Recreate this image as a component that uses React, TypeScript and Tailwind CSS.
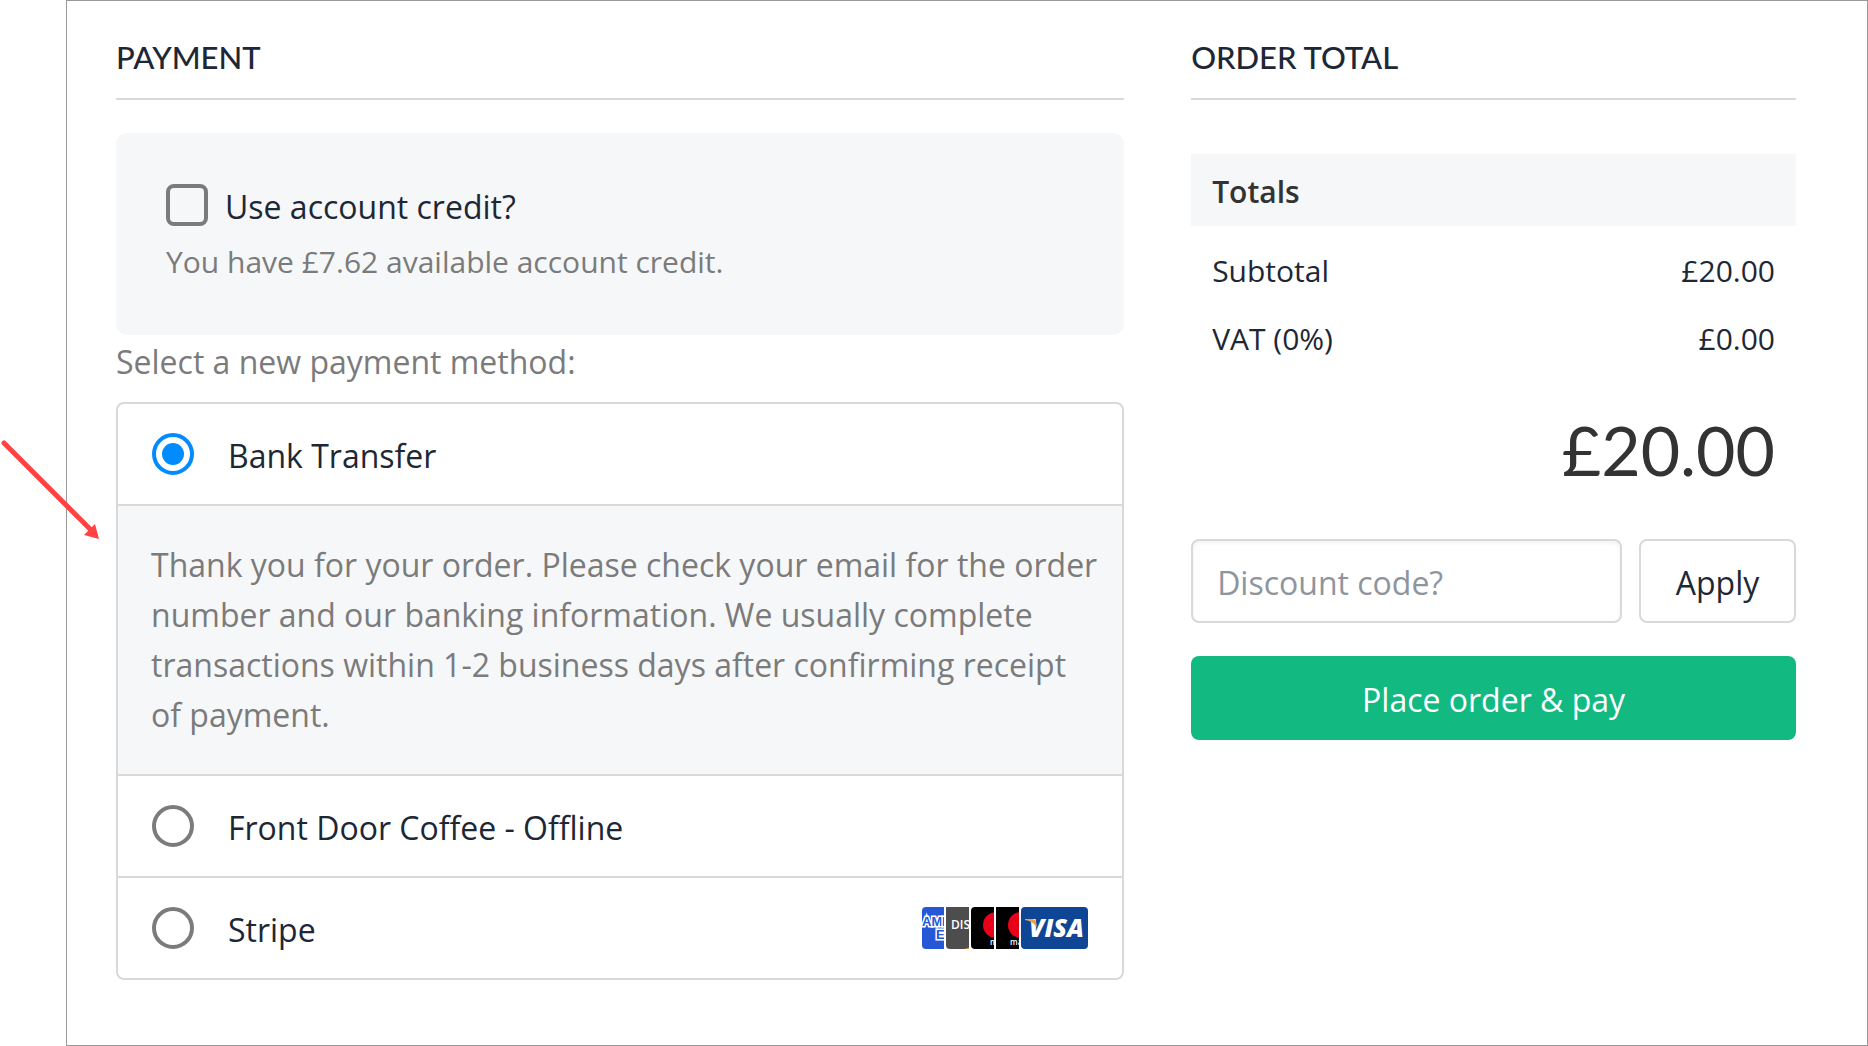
import { useState, type ReactNode } from "react"

const methods = [
  {
    id: "bank",
    label: "Bank Transfer",
    details:
      "Thank you for your order. Please check your email for the order number and our banking information. We usually complete transactions within 1-2 business days after confirming receipt of payment.",
  },
  { id: "offline", label: "Front Door Coffee - Offline" },
  { id: "stripe", label: "Stripe", cards: true },
]

const totals = [
  { label: "Subtotal", value: "£20.00" },
  { label: "VAT (0%)", value: "£0.00" },
]

function SectionHeading({ children }: { children: ReactNode }) {
  return (
    <h2 className="border-b-2 border-[#d9d9d9] pt-[35px] pb-5 font-['Lato',sans-serif] text-[31px] leading-[42px] font-medium uppercase">
      {children}
    </h2>
  )
}

function CardLogos() {
  return (
    <svg width="166" height="42" viewBox="0 0 166 42" role="img" aria-label="Accepted cards" className="shrink-0">
      <defs>
        <clipPath id="amex"><rect width="22" height="42" /></clipPath>
        <clipPath id="discover"><rect x="24" width="23" height="42" /></clipPath>
        <clipPath id="maestro"><rect x="49" width="23" height="42" /></clipPath>
        <clipPath id="mastercard"><rect x="74" width="23" height="42" /></clipPath>
      </defs>
      {/* Amex */}
      <g clipPath="url(#amex)">
        <rect width="66" height="42" rx="4" fill="#2557d6" />
        <g fontFamily="Liberation Sans, sans-serif" fontWeight="700" fontSize="13" fill="#2557d6" stroke="#fff" strokeWidth="3" paintOrder="stroke">
          <text x="0" y="19">AM</text>
          <text x="20" y="19">E</text>
          <text x="14" y="32">E</text>
        </g>
      </g>
      {/* Discover */}
      <g clipPath="url(#discover)">
        <rect x="24" width="10" height="10" fill="#2557d6" />
        <rect x="24" width="66" height="42" rx="4" fill="#4d4d4d" />
        <path d="M40 42Q44 42 47 40.500V42Z" fill="#f3922f" />
        <text x="29" y="22" fontFamily="Open Sans, sans-serif" fontWeight="600" fontSize="12" fill="#fff">DIS</text>
      </g>
      {/* Maestro */}
      <g clipPath="url(#maestro)">
        <rect x="49" width="66" height="42" rx="4" fill="#000" />
        <circle cx="74" cy="18" r="13" fill="#eb001b" />
        <text x="68" y="38" fontFamily="Open Sans, sans-serif" fontWeight="600" fontSize="8" fill="#fff">m</text>
      </g>
      {/* Mastercard */}
      <g clipPath="url(#mastercard)">
        <rect x="74" width="66" height="42" fill="#000" />
        <circle cx="99" cy="18" r="13" fill="#eb001b" />
        <text x="88" y="38" fontFamily="Open Sans, sans-serif" fontWeight="600" fontSize="8" fill="#fff">ma</text>
      </g>
      {/* Visa */}
      <rect x="99" width="67" height="42" rx="4" fill="#0e4595" />
      <text x="107" y="30" fontFamily="Open Sans, sans-serif" fontWeight="800" fontStyle="italic" fontSize="25" fill="#fff">VISA</text>
      <path d="M103 12H110Q113 12 114 15L115 20Q110 14 103 13Z" fill="#eba04a" />
    </svg>
  )
}

function PointerArrow() {
  return (
    <svg width="104" height="104" viewBox="0 0 104 104" aria-hidden="true" className="absolute top-[439px] left-0">
      <path d="M4 4 90 90" stroke="#ff4343" strokeWidth="5" strokeLinecap="round" />
      <path d="M99 100 84 96 95 85Z" fill="#ff4343" />
    </svg>
  )
}

export default function App() {
  const [method, setMethod] = useState("bank")

  return (
    <div className="relative flex min-h-screen bg-white pl-[66px] font-['Open_Sans',sans-serif] text-[#1d2735]">
      <main className="grid flex-1 grid-cols-[minmax(0,5fr)_minmax(0,3fr)] items-start gap-x-[67px] border border-[#999] pr-[71px] pl-[49px]">
        {/* Payment */}
        <section>
          <SectionHeading>Payment</SectionHeading>
          <div className="mt-[33px] rounded-xl bg-[#f6f7f9] px-[50px] pt-[51px] pb-[49px]">
            <div className="flex items-start gap-[17px]">
              <input
                id="credit"
                type="checkbox"
                className="size-[42px] appearance-none rounded-lg border-4 border-[#7b7b7b] checked:bg-[#008cff]"
              />
              <label htmlFor="credit" className="text-[32px] leading-[46px]">
                Use account credit?
              </label>
            </div>
            <p className="pt-2 text-[30px] leading-[48px] text-[#7b7b7b]">
              You have £7.62 available account credit.
            </p>
          </div>

          <fieldset>
            <legend className="pb-2 text-[32px] leading-[54px] text-[#7b7b7b]">
              Select a new payment method:
            </legend>
            <div className="mt-[5px] divide-y-2 divide-[#d9d9d9] overflow-hidden rounded-lg border-2 border-[#d9d9d9]">
              {methods.map((m) => (
                <div key={m.id} className="divide-y-2 divide-[#d9d9d9]">
                  <div className="flex items-start px-[34px] pt-[29px] pb-[25px]">
                    <input
                      id={m.id}
                      type="radio"
                      name="method"
                      checked={method === m.id}
                      onChange={() => setMethod(m.id)}
                      className="size-[42px] shrink-0 appearance-none rounded-full border-4 border-[#7b7b7b] bg-white bg-clip-content p-[6px] checked:border-[#008cff] checked:bg-[#008cff]"
                    />
                    <label htmlFor={m.id} className="flex-1 pl-[34px] text-[32px] leading-[46px]">
                      {m.label}
                    </label>
                    {m.cards && <CardLogos />}
                  </div>
                  {m.details && method === m.id && (
                    <p className="bg-[#f6f7f9] py-[34px] pr-5 pl-[33px] text-[32px] leading-[50px] text-[#7b7b7b]">
                      {m.details}
                    </p>
                  )}
                </div>
              ))}
            </div>
          </fieldset>
        </section>

        {/* Order total */}
        <section>
          <SectionHeading>Order total</SectionHeading>
          <table className="mt-[54px] w-full text-[30px] leading-[46px]">
            <thead>
              <tr className="bg-[#f6f7f9] text-left text-[#333]">
                <th colSpan={2} className="px-[21px] pt-[15px] pb-[11px] font-semibold">Totals</th>
              </tr>
            </thead>
            <tbody>
              {totals.map((t) => (
                <tr key={t.label}>
                  <td className="px-[21px] pt-[22px]">{t.label}</td>
                  <td className="px-[21px] pt-[22px] text-right">{t.value}</td>
                </tr>
              ))}
            </tbody>
          </table>
          <p className="px-[21px] pt-[43px] text-right font-['Lato',sans-serif] text-[68px] leading-[90px] text-[#333]">
            £20.00
          </p>

          <form className="flex gap-[17px] pt-[44px]" onSubmit={(e) => e.preventDefault()}>
            <input
              type="text"
              aria-label="Discount code"
              placeholder="Discount code?"
              className="h-[84px] min-w-0 flex-1 rounded-lg border-2 border-[#d9d9d9] px-6 pt-[2px] text-[32px] shadow-[inset_0_2px_4px_rgba(0,0,0,0.06)] placeholder:text-[#8f959c]"
            />
            <button type="submit" className="h-[84px] w-[157px] rounded-lg border-2 border-[#d9d9d9] pt-1 text-[32px]">
              Apply
            </button>
          </form>
          <button type="button" className="mt-[33px] h-[84px] w-full rounded-lg bg-[#12b981] pt-1 text-[32px] text-white">
            Place order &amp; pay
          </button>
        </section>
      </main>
      <PointerArrow />
    </div>
  )
}
